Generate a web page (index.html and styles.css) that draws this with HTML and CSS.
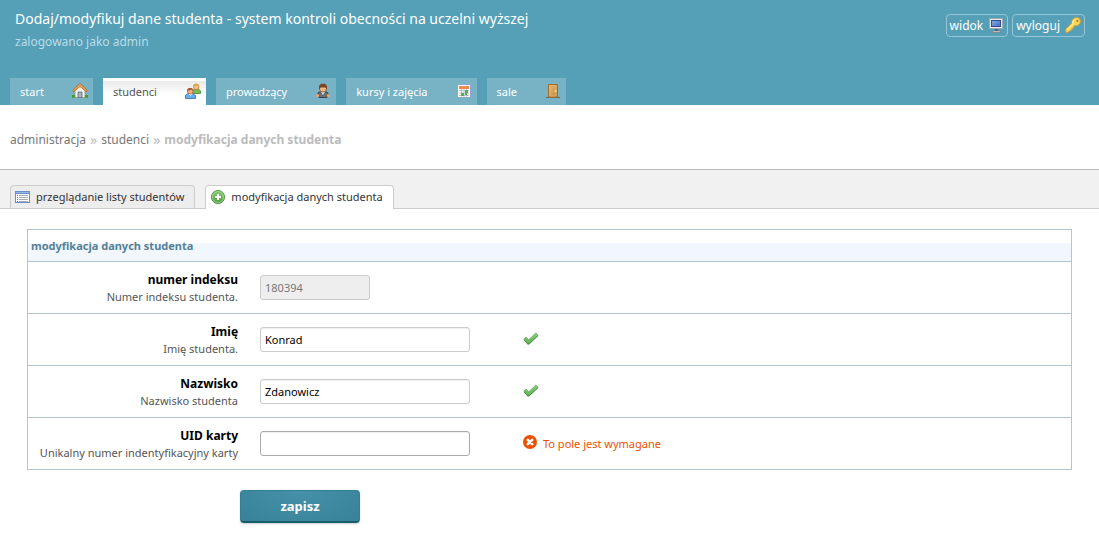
FILE: index.html
```html
<!DOCTYPE html>
<html lang="pl">
<head>
<meta charset="utf-8">
<title>Dodaj/modyfikuj dane studenta</title>
<link rel="stylesheet" href="styles.css">
</head>
<body>
<svg class="defs" aria-hidden="true">
  <defs>
    <linearGradient id="tick" x1="0" y1="0" x2="0" y2="1"><stop offset="0" stop-color="#8bd07c"/><stop offset="1" stop-color="#5cb357"/></linearGradient>
    <linearGradient id="plus" x1="0" y1="0" x2="0" y2="1"><stop offset="0" stop-color="#8cc97a"/><stop offset="1" stop-color="#4c9c3d"/></linearGradient>
    <linearGradient id="screen" x1="0" y1="0" x2="1" y2="1"><stop offset="0" stop-color="#87a9e4"/><stop offset="1" stop-color="#4a6fbd"/></linearGradient>
    <linearGradient id="door" x1="0" y1="0" x2="1" y2="1"><stop offset="0" stop-color="#e5b872"/><stop offset="1" stop-color="#c48a45"/></linearGradient>
    <symbol id="check" viewBox="0 0 16 16"><path d="M.8 8.200 3 6.200l2.800 2.600L12.800 2 15.200 4.300 6 13.200H4.600Z" fill="url(#tick)" stroke="#5aa552" stroke-width=".7"/><path d="M1.200 9.200 4.800 12.800H6L15 4.800" fill="none" stroke="#3f8639" stroke-width=".8"/></symbol>
  </defs>
</svg>
<header class="header">
  <div class="top">
    <div>
      <h1 class="title">Dodaj/modyfikuj dane studenta - system kontroli obecności na uczelni wyższej</h1>
      <p class="user">zalogowano jako admin</p>
    </div>
    <div class="actions">
      <a class="action" href="#">widok
        <svg class="icon" viewBox="0 0 16 16"><path d="M1 1h14v11H1z" fill="#a3a7af"/><path d="M2 2h12v9H2z" fill="#e8e9ec"/><path d="M3 3h10v7H3z" fill="#33508c"/><path d="M4 4h8v5H4z" fill="url(#screen)"/><path d="M7 12h3v2H7z" fill="#5d6168"/><path d="M4.500 14h8v1.500h-8z" fill="#d9dadd" stroke="#6c7077" stroke-width=".6"/></svg>
      </a>
      <a class="action" href="#">wyloguj
        <svg class="icon" viewBox="0 0 16 16"><path d="M10 .7h3.500L15.400 3v3L12.500 8.800H9.800L8.300 10.200v1.600H6.700v1.600H5.200L3.300 15.300H.7v-3.100l6-6V3.500Z" fill="#f9d65c" stroke="#d19a2b" stroke-width=".9"/><path d="M2 12.800 8 6.700V4l2.500-2" fill="none" stroke="#fff3ad"/><path d="M11.500 3h1.700v1.800h-1.700z" fill="#a36d16"/></svg>
      </a>
    </div>
  </div>
  <nav class="nav">
    <a class="tab" href="#">start
      <svg class="icon" viewBox="0 0 16 16"><path d="M0 13.500h16V15H0z" fill="#5faa43"/><path d="M3 7l5-5 5 5v7.500H3z" fill="#f5f2e9" stroke="#9a978e" stroke-width=".8"/><path d="M6 9h4v5.500H6z" fill="#a8b3bf" stroke="#65707c" stroke-width=".8"/><path d="M.5 7.500 7 1h2l6.500 6.500-1.300 1.300L8 3.500 1.800 8.800Z" fill="#dfa25b" stroke="#a86d35" stroke-width=".8"/><path d="M0 12h3v2.500H0zM13 12h3v2.500h-3z" fill="#469a32"/></svg>
    </a>
    <a class="tab tab-active" href="#">studenci
      <svg class="icon" viewBox="0 0 16 16"><path d="M7.300 10V8.200L9.500 6h4L15.600 8v2.500H9Z" fill="#75bc57" stroke="#3d8c31" stroke-width=".8"/><circle cx="11.200" cy="3.800" r="2.800" fill="#f6bd8a" stroke="#b57a32" stroke-width=".7"/><path d="M8.200 3.500C8 0 14 0 14.200 3.300L12 2.500Z" fill="#e0a93e"/><path d="M.5 15.500V12.200L3 10.500h4.500l3 2v3Z" fill="#69aef0" stroke="#2969b7" stroke-width=".8"/><circle cx="5.300" cy="8.200" r="2.900" fill="#f5ad7d" stroke="#9c5a31" stroke-width=".7"/><path d="M2.200 8C1.800 4 8.500 4 8.500 8L6.500 6.600Z" fill="#9d512b"/><path d="M4 11l1.300 1.300L6.800 11" fill="none" stroke="#fff"/></svg>
    </a>
    <a class="tab" href="#">prowadzący
      <svg class="icon" viewBox="0 0 16 16"><path d="M4 9h8l2 3-2 2.500H4L2 12Z" fill="#6a6e75" stroke="#3c4047"/><circle cx="2.500" cy="12.500" r="1.600" fill="#eea671"/><circle cx="13.500" cy="12.500" r="1.600" fill="#eea671"/><path d="M6 9h4l-2 3Z" fill="#d8dce1"/><circle cx="8" cy="5.500" r="3.500" fill="#f6b782" stroke="#85502c" stroke-width=".7"/><path d="M4 7V3l2-2.200h4L12 3v4l-1.500-2.500h-5Z" fill="#7e4426"/></svg>
    </a>
    <a class="tab" href="#">kursy i zajęcia
      <svg class="icon" viewBox="0 0 16 16"><path d="M1.500 1.500h13v13h-13z" fill="#fff" stroke="#91a5d7"/><path d="M3 3h10v3H3z" fill="#f18b4e"/><path d="M3 7.500h10M3 10h10M3 12.500h10M5.500 6v7.500M8 6v7.500M10.500 6v7.500" stroke="#9daec4" stroke-width=".7"/><path d="M9 7h3v3H9zM5 10h3v3H5zM9 10h2v2H9z" fill="#5aae50"/></svg>
    </a>
    <a class="tab" href="#">sale
      <svg class="icon" viewBox="0 0 16 16"><path d="M1 14h14v1H1z" fill="#74664f"/><path d="M3.500 1.500h9v12.500h-9z" fill="url(#door)" stroke="#a66c2d"/><path d="M5 3h6v10H5z" fill="none" stroke="#e3ba7b" stroke-width=".6"/><circle cx="10.500" cy="8" r="1" fill="#ffe55c"/></svg>
    </a>
  </nav>
</header>
<nav class="crumbs">
  <a class="crumb" href="#">administracja</a>
  <span class="crumb-mark">»</span>
  <a class="crumb" href="#">studenci</a>
  <span class="crumb-mark">»</span>
  <strong>modyfikacja danych studenta</strong>
</nav>
<nav class="subnav">
  <a class="subtab" href="#">
    <svg class="icon" viewBox="0 0 16 16" shape-rendering="crispEdges"><path d="M0 2h15v12H0z" fill="#6b8dcc"/><path d="M1 5h13v8H1z" fill="#fff"/><path d="M1 3h13v1H1z" fill="#8fb9ee"/><path d="M2 6h1v1H2zM2 8h1v1H2zM2 10h1v1H2zM2 12h1v1H2z" fill="#5f80b6"/><path d="M4 6h9v1H4zM4 8h9v1H4zM4 10h9v1H4zM4 12h9v1H4z" fill="#a7abb2"/></svg>
    przeglądanie listy studentów</a>
  <a class="subtab subtab-active" href="#">
    <svg class="icon" viewBox="0 0 16 16"><circle cx="8" cy="8" r="6.600" fill="url(#plus)" stroke="#4f9744" stroke-width=".9"/><circle cx="8" cy="8" r="5.500" fill="none" stroke="#a9d79d" stroke-width=".8"/><path d="M8 5v6M5 8h6" stroke="#fff" stroke-width="2"/></svg>
    modyfikacja danych studenta</a>
</nav>
<main>
  <form class="form">
    <div class="panel">
      <h2 class="panel-title">modyfikacja danych studenta</h2>
      <div class="row">
        <label class="label" for="indeks"><b class="name">numer indeksu</b><span class="hint">Numer indeksu studenta.</span></label>
        <div class="control"><input class="field field-short" id="indeks" type="text" value="180394" disabled></div>
      </div>
      <div class="row">
        <label class="label" for="imie"><b class="name">Imię</b><span class="hint">Imię studenta.</span></label>
        <div class="control"><input class="field" id="imie" type="text" value="Konrad"></div>
        <svg class="icon" role="img" aria-label="OK"><use href="#check"/></svg>
      </div>
      <div class="row">
        <label class="label" for="nazwisko"><b class="name">Nazwisko</b><span class="hint">Nazwisko studenta</span></label>
        <div class="control"><input class="field" id="nazwisko" type="text" value="Zdanowicz"></div>
        <svg class="icon" role="img" aria-label="OK"><use href="#check"/></svg>
      </div>
      <div class="row">
        <label class="label" for="uid"><b class="name">UID karty</b><span class="hint">Unikalny numer indentyfikacyjny karty</span></label>
        <div class="control"><input class="field field-invalid" id="uid" type="text"></div>
        <p class="error"><svg class="icon" viewBox="0 0 16 16"><circle cx="7" cy="7" r="7" fill="#ea5200"/><path d="M4.800 4.800l4.400 4.400M9.200 4.800 4.800 9.200" stroke="#fff" stroke-width="2.600" stroke-linecap="round"/></svg>To pole jest wymagane</p>
      </div>
    </div>
    <button class="save" type="submit">zapisz</button>
  </form>
</main>
</body>
</html>
```
FILE: styles.css
```css
* { box-sizing: border-box; }

body {
  margin: 0;
  background: #fff;
  color: #333;
  font: 11px/16px "Noto Sans", "Open Sans", sans-serif;
}

h1, h2, p { margin: 0; }
a { color: inherit; text-decoration: none; }

.defs { position: absolute; width: 0; height: 0; }
.icon { flex: none; width: 16px; height: 16px; }

.header { background: #559fb7; color: #fff; }

.top {
  display: flex;
  justify-content: space-between;
  height: 78px;
  padding: 9px 14px 0 15px;
}

.title { font-size: 14px; font-weight: 400; line-height: 20px; }
.user { color: #b9dce7; font-size: 12px; line-height: 25px; }

.actions { display: flex; align-items: flex-start; gap: 4px; padding-top: 5px; }

.action {
  display: flex;
  align-items: center;
  gap: 5px;
  height: 23px;
  padding: 0 3px;
  border: 1px solid #94c6d7;
  border-radius: 4px;
  font-size: 12px;
}

.action .icon { margin-bottom: 2px; }

.nav { display: flex; gap: 10px; padding: 0 10px; }

.tab {
  display: flex;
  align-items: center;
  gap: 28px;
  height: 27px;
  padding: 0 5px 0 10px;
  background: #78b2c5;
}

.tab .icon { margin-bottom: 2px; }

.tab-active {
  background: linear-gradient(#fff 3px, #e9e9e9 3px, #fff 16px);
  color: #555;
}

.crumbs {
  display: flex;
  gap: 4px;
  padding: 24px 10px 19px;
  border-bottom: 1px solid #bbb;
  color: #bbb;
  font-size: 12px;
  line-height: 21px;
}

.crumb { color: #777; }
.crumb-mark { font-size: 14px; }

.subnav {
  display: flex;
  gap: 10px;
  height: 39px;
  padding: 15px 10px 0;
  border-bottom: 1px solid #ccc;
  background: #f1f1f1;
}

.subtab {
  display: flex;
  align-items: center;
  gap: 5px;
  height: 23px;
  padding: 0 10px 0 4px;
  border: 1px solid #ccc;
  border-bottom: 0;
  border-radius: 4px 4px 0 0;
  background: #ededed;
}

.subtab-active { height: 24px; padding-bottom: 1px; background: #fff; }

.form { padding: 20px 27px; }
.panel { border: 1px solid #b2c5cf; }

.panel-title {
  padding: 0 3px;
  background: linear-gradient(#fff 13px, #f2f7fe 13px);
  color: #558196;
  font-size: 11px;
  line-height: 31px;
}

.row {
  display: flex;
  align-items: center;
  height: 52px;
  border-top: 1px solid #b2c5cf;
}

.label { width: 210px; text-align: right; }

.name {
  display: block;
  color: #000;
  font-size: 12px;
  line-height: 18px;
}

.hint { display: block; color: #555; }
.control { width: 263px; margin-left: 22px; }

.field {
  display: block;
  width: 210px;
  height: 25px;
  padding: 0 4px;
  border: 1px solid #ccc;
  border-radius: 3px;
  background: #fff;
  box-shadow: inset 0 1px 1px #eee;
  color: #000;
  font: inherit;
}

.field-short { width: 110px; }
.field:disabled { background: #eee; color: #777; }
.field-invalid { border-color: #aaa; }

.row .icon { margin-bottom: 2px; }

.error {
  display: flex;
  align-items: center;
  gap: 4px;
  color: #ea5200;
}

.save {
  display: block;
  width: 120px;
  height: 33px;
  margin: 20px 0 0 213px;
  padding: 0;
  border: 1px solid #347f94;
  border-bottom: 2px solid #155f6c;
  border-radius: 4px;
  background: radial-gradient(ellipse at top, #4591a9, #398299);
  box-shadow: 0 1px 2px #ccc;
  color: #fff;
  font: bold 13px/28px "Noto Sans", "Open Sans", sans-serif;
}
```
